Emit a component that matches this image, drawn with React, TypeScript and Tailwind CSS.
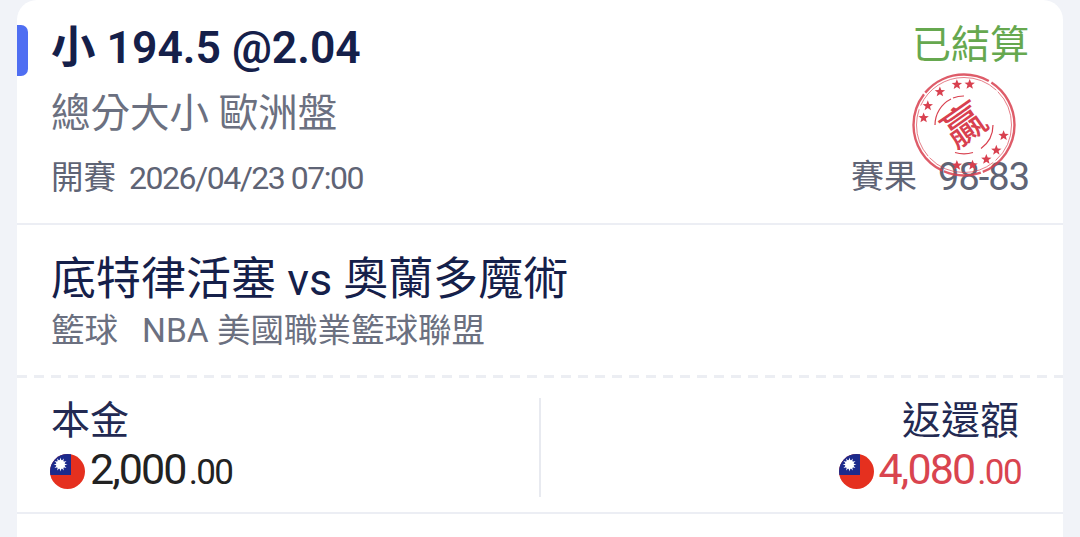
const cjk = "font-['Roboto','Noto_Sans_CJK_TC',sans-serif]";

function Flag({ id }: { id: string }) {
  const rays = Array.from({ length: 12 }, (_, i) => i * 30);
  return (
    <svg width="35" height="35" viewBox="0 0 35 35" className="shrink-0">
      <defs>
        <clipPath id={id}>
          <circle cx="17.5" cy="17.5" r="17.5" />
        </clipPath>
      </defs>
      <g clipPath={`url(#${id})`}>
        <rect width="35" height="35" fill="#e5301f" />
        <rect width="21" height="21" fill="#1c2a8c" />
        {rays.map((r) => (
          <polygon key={r} points="10.5,3.6 11.8,8 9.2,8" fill="#fff" transform={`rotate(${r} 10.5 10.5)`} />
        ))}
        <circle cx="10.5" cy="10.5" r="4.4" fill="#fff" />
      </g>
    </svg>
  );
}

function Stamp() {
  const stars = [-170, -152, -126, -100, -82, 15, 38, 57, 78, 100];
  const star = "0,-5.4 1.4,-1.8 5.2,-1.6 2.2,0.7 3.2,4.4 0,2.3 -3.2,4.4 -2.2,0.7 -5.2,-1.6 -1.4,-1.8";
  return (
    <svg width="106" height="106" viewBox="0 0 106 106" className="absolute right-[46px] top-[72px]">
      <g fill="none" stroke="#d8404f">
        <circle cx="53" cy="53" r="50.5" strokeWidth="2.4" strokeDasharray="60 2 38 1.5 90 2 70 3" opacity="0.85" />
        <circle cx="53" cy="53" r="47.5" strokeWidth="0.9" strokeDasharray="40 3 70 2 50 4 90 2" opacity="0.75" />
        <path d="M24 53 A29 29 0 0 1 40 27" strokeWidth="1.2" />
        <path d="M42 26 A29 29 0 0 1 53 24" strokeWidth="1.2" />
        <path d="M82 53 A29 29 0 0 1 70 76.5" strokeWidth="1.2" />
        <path d="M62 80.5 A29 29 0 0 1 44 80.5" strokeWidth="1.2" />
      </g>
      {stars.map((a) => {
        const t = (a * Math.PI) / 180;
        const x = 53 + 41 * Math.cos(t);
        const y = 53 + 41 * Math.sin(t);
        return <polygon key={a} points={star} fill="#d8404f" transform={`translate(${x} ${y})`} />;
      })}
      <text
        x="53"
        y="68"
        textAnchor="middle"
        fontSize="42"
        fontWeight="500"
        fill="#d8404f"
        transform="rotate(-35 53 53)"
        fontFamily="'Noto Sans CJK TC', sans-serif"
      >
        贏
      </text>
    </svg>
  );
}

export default function App() {
  return (
    <div className={`h-[537px] w-[1080px] overflow-hidden bg-[#f1f3f8] px-[17px] ${cjk}`}>
      <div className="relative h-[537px] rounded-t-[20px] bg-white">
        <div className="absolute left-0 top-[25px] h-[51px] w-[11px] rounded-r-[7px] bg-[#4f6ef2]" />
        <section className="flex h-[225px] justify-between border-b-2 border-[#eceef4] pl-[34px] pr-[34px]">
          <div className="flex flex-col">
            <div className="mt-[23px] h-[50px] text-[44.5px] font-semibold leading-[50px] text-[#15204a]">小 194.5 @2.04</div>
            <div className="mt-[17px] h-[48px] text-[39.5px] leading-[48px] text-[#6b7080]">總分大小 歐洲盤</div>
            <div className="mt-[20px] flex h-[40px] items-center gap-[13px] text-[#5f6475]">
              <span className="text-[32.5px] leading-[40px]">開賽</span>
              <span className="text-[32px] leading-[40px] tracking-[-1.5px]">2026/04/23 07:00</span>
            </div>
          </div>
          <div className="relative flex flex-col items-end">
            <div className="mt-[20px] h-[50px] text-[39px] leading-[50px] text-[#66a84f]">已結算</div>
            <div className="mt-[87px] flex h-[40px] items-center gap-[21px] text-[#5f6475]">
              <span className="text-[33px] leading-[40px]">賽果</span>
              <span className="text-[38px] leading-[40px] tracking-[-1px]">98-83</span>
            </div>
          </div>
        </section>
        <Stamp />
        <section className="h-[150px] pl-[34px]">
          <div className="pt-[27px] text-[45px] leading-[56px] text-[#15204a]">底特律活塞 vs 奧蘭多魔術</div>
          <div className="mt-[1px] flex gap-[24px] text-[33.5px] leading-[44px] text-[#6b7080]">
            <span>籃球</span>
            <span>NBA 美國職業籃球聯盟</span>
          </div>
        </section>
        <div className="h-[3px] bg-[repeating-linear-gradient(90deg,#eceef3_0,#eceef3_10px,transparent_10px,transparent_17px)]" />
        <section className="flex h-[136px] border-b-2 border-[#eceef4]">
          <div className="mb-[15px] mt-[20px] flex w-[524px] flex-col border-r-2 border-[#e8eaf0] pl-[33px]">
            <div className="pl-[1px] text-[39px] leading-[46px] text-[#232a52]">本金</div>
            <div className="mt-[2px] flex h-[50px] items-center gap-[5px] text-[#222]">
              <Flag id="a" />
              <span className="text-[43px] leading-[50px] tracking-[-1.9px]">2,000<span className="ml-[3px] text-[35px] tracking-[-1.6px]">.00</span></span>
            </div>
          </div>
          <div className="mb-[15px] mt-[20px] flex flex-1 flex-col items-end pr-[42px]">
            <div className="mr-[2px] text-[39px] leading-[46px] text-[#232a52]">返還額</div>
            <div className="mt-[2px] flex h-[50px] items-center gap-[5px] text-[#d9444f]">
              <Flag id="b" />
              <span className="text-[43px] leading-[50px] tracking-[-1.9px]">4,080<span className="ml-[3px] text-[35px] tracking-[-1.6px]">.00</span></span>
            </div>
          </div>
        </section>
      </div>
    </div>
  );
}
